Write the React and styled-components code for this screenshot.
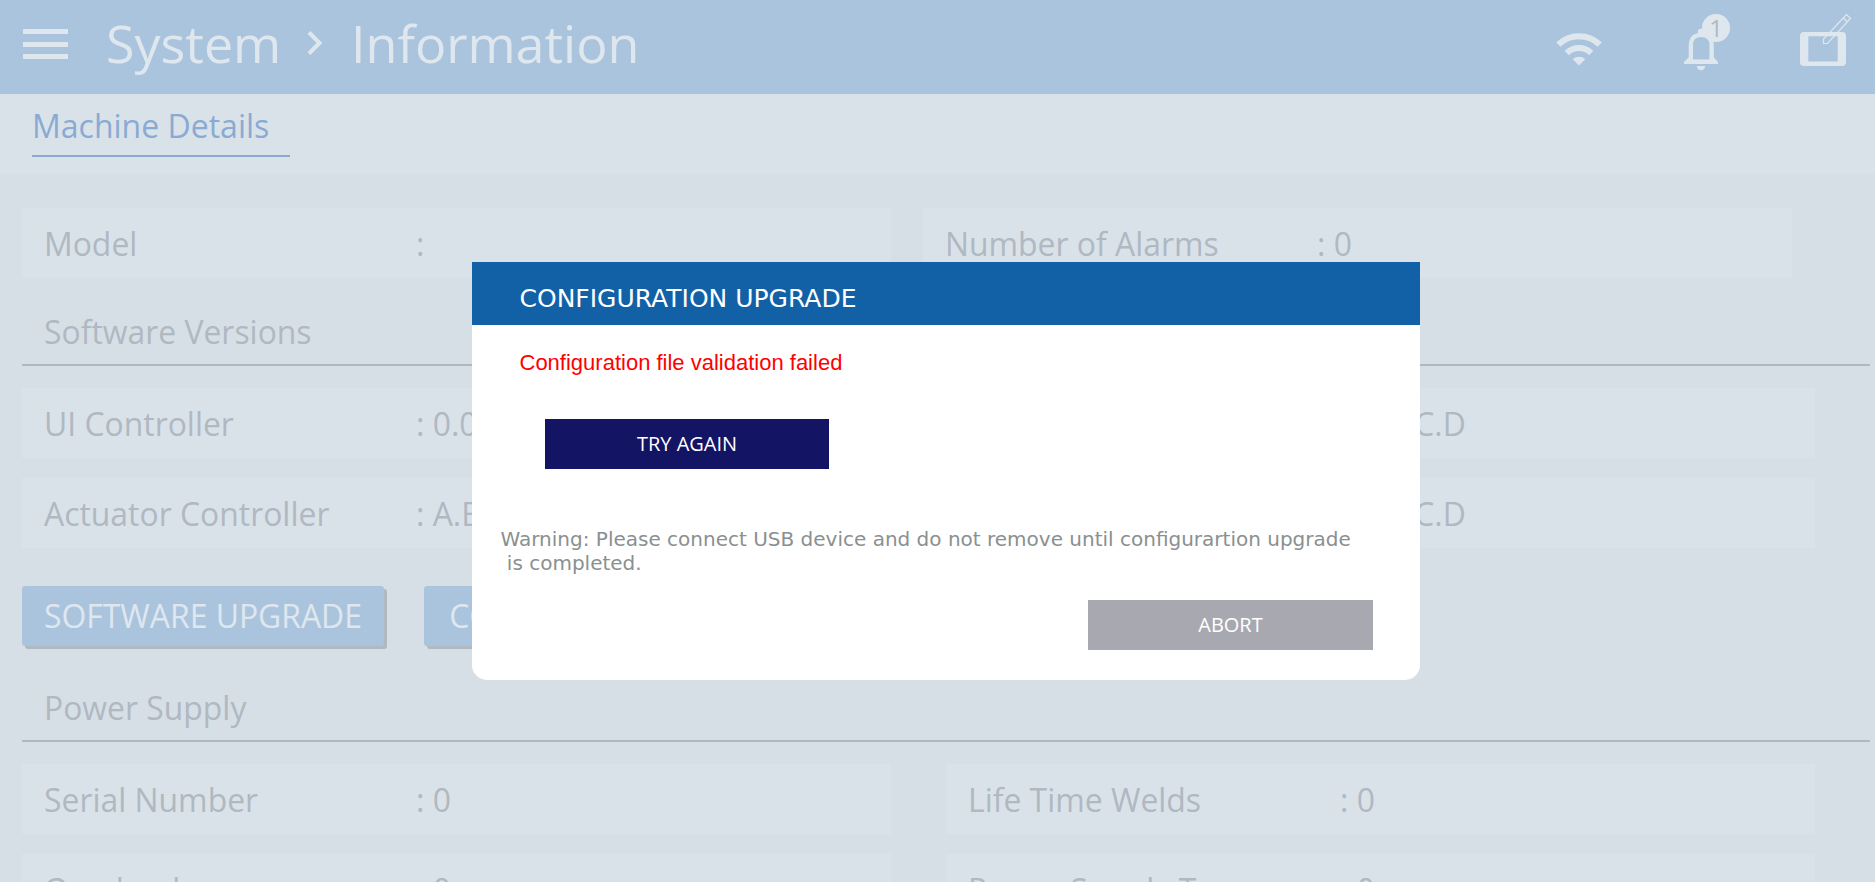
import React from "react";
import styled, { createGlobalStyle } from "styled-components";

const color = {
  bar: "#abc4de",
  onBar: "#dfe7ee",
  page: "#d7dfe6",
  panel: "#dae2e9",
  text: "#b0b8c2",
  link: "#89abd3",
};

const GlobalStyle = createGlobalStyle`
  body { margin: 0; overflow: hidden; }
  * { box-sizing: border-box; }
`;

const Page = styled.div`
  position: relative;
  width: 1875px;
  height: 882px;
  overflow: hidden;
  background: ${color.page};
  color: ${color.text};
  font-family: "Open Sans", sans-serif;
  font-size: 32px;
  white-space: nowrap;
`;

const Header = styled.header`
  display: flex;
  align-items: flex-start;
  height: 94px;
  padding-left: 23px;
  background: ${color.bar};
  color: ${color.onBar};
`;

const Hamburger = styled.div`
  display: flex;
  flex-direction: column;
  justify-content: space-between;
  width: 45px;
  height: 30px;
  margin: 29px 38px 0 0;
`;

const Bar = styled.span`
  height: 5px;
  background: ${color.onBar};
`;

const Crumb = styled.span`
  width: ${(p) => p.$width}px;
  font-size: 52px;
  line-height: 86px;
`;

const Chevron = styled.svg`
  width: 18px;
  height: 26px;
  margin: 30px 27px 0 25px;
`;

const HeaderIcons = styled.div`
  display: flex;
  margin-left: auto;
`;

const HeaderIcon = styled.svg`
  display: block;
  height: 94px;
  width: 100px;
`;

const BellSlot = styled.div`
  position: relative;
  width: 100px;
  margin: 0 11px 0 29px;
`;

const Badge = styled.span`
  position: absolute;
  left: 38px;
  top: 14px;
  width: 28px;
  height: 28px;
  border-radius: 50%;
  background: ${color.onBar};
  color: ${color.text};
  font-size: 24px;
  line-height: 28px;
  text-align: center;
`;

const TabStrip = styled.nav`
  height: 80px;
  padding: 10px 0 0 32px;
  background: ${color.panel};
`;

const Tab = styled.div`
  width: 258px;
  padding-bottom: 7px;
  border-bottom: 2px solid ${color.link};
  color: ${color.link};
  line-height: 44px;
`;

const Content = styled.main`
  padding: 34px 5px 0 22px;
`;

const Rows = styled.div`
  display: grid;
  grid-template-columns: 869px 869px;
  column-gap: ${(p) => p.$gap}px;
  row-gap: 20px;
`;

const Row = styled.div`
  display: flex;
  height: 70px;
  padding: 1px 0 0 22px;
  background: ${color.panel};
  font-size: 31.9px;
  line-height: 69px;
`;

const Label = styled.span`
  width: 372px;
`;

const SectionTitle = styled.h2`
  height: 68px;
  margin: ${(p) => p.$top}px 0 22px;
  padding: 1px 0 0 22px;
  border-bottom: 2px solid ${color.text};
  font-size: 31.9px;
  font-weight: 400;
  line-height: 66px;
`;

const Actions = styled.div`
  display: flex;
  gap: 40px;
  margin-top: 38px;
`;

const ActionButton = styled.button`
  width: ${(p) => p.$width}px;
  height: 60px;
  padding: 0;
  border: 0;
  border-radius: 3px;
  background: ${color.bar};
  box-shadow: 3px 3px 0 ${color.text};
  color: ${color.onBar};
  font: 31.9px/60px "Open Sans", sans-serif;
`;

const Overlay = styled.div`
  position: absolute;
  inset: 0;
  display: flex;
  align-items: flex-start;
  padding: 262px 0 0 472px;
`;

const Dialog = styled.section`
  display: flex;
  flex-direction: column;
  width: 948px;
  height: 418px;
  overflow: hidden;
  border-radius: 0 0 15px 15px;
  background: #fff;
`;

const DialogTitle = styled.h1`
  height: 63px;
  margin: 0;
  padding: 11px 0 0 47.5px;
  background: #1261a6;
  color: #fff;
  font: 400 25px/52px "DejaVu Sans", sans-serif;
`;

const ErrorText = styled.p`
  margin: 23px 0 0 47.5px;
  color: #f00;
  font: 22px/30px "Liberation Sans", sans-serif;
`;

const DialogButton = styled.button`
  width: ${(p) => (p.$muted ? 285 : 284)}px;
  height: 50px;
  margin: ${(p) => (p.$muted ? "25px 47px 0 auto" : "41px 0 0 73px")};
  padding: 0;
  border: 0;
  background: ${(p) => (p.$muted ? "#a8a8b1" : "#141464")};
  color: #fff;
  font: 20px/50px "Open Sans", sans-serif;
`;

const Warning = styled.p`
  margin: 58px 0 0 28.5px;
  color: #8a9090;
  font: 20px/24px "DejaVu Sans", sans-serif;
  white-space: pre;
`;

function Field({ label, value }) {
  return (
    <Row>
      <Label>{label}</Label>
      <span>: {value}</span>
    </Row>
  );
}

function WifiIcon() {
  return (
    <HeaderIcon viewBox="0 0 100 94" fill="none" stroke={color.onBar} strokeWidth="6">
      <path d="M23.3 44.5 A30 30 0 0 1 64.7 44.5" />
      <path d="M31.8 53 A17.5 17.5 0 0 1 56.2 53" />
      <path d="M44 65.5 L37.8 59.3 A9 9 0 0 1 50.2 59.3 Z" fill={color.onBar} stroke="none" />
    </HeaderIcon>
  );
}

function BellIcon() {
  return (
    <HeaderIcon viewBox="0 0 100 94" fill={color.onBar}>
      <circle cx="37" cy="32" r="3.2" />
      <path
        fillRule="evenodd"
        d="M20 64 V62 L24.7 57.5 V46 Q24.7 33 37 33 Q49.8 33 49.8 46 V57.5 L54 62 V64 Z M29 59.5 H45.5 V45 Q45.5 37 37 37 Q29 37 29 45 Z"
      />
      <path d="M32.8 66 H41.2 A4.2 4.2 0 0 1 32.8 66 Z" />
    </HeaderIcon>
  );
}

function TabletIcon() {
  return (
    <HeaderIcon viewBox="0 0 100 94" fill="none" stroke={color.onBar}>
      <path
        fill={color.onBar}
        stroke="none"
        fillRule="evenodd"
        d="M29 32 H67 Q71 32 71 36 V62 Q71 66 67 66 H29 Q25 66 25 62 V36 Q25 32 29 32 Z M33.3 36.3 V61.5 H62.7 V36.3 Z"
      />
      <path d="M48.5 43.5 V39 L71.5 14.5 L75.5 18.5 L52.5 43.5 Z M68.5 18 L72.3 22" strokeWidth="1.2" />
    </HeaderIcon>
  );
}

export default function App() {
  return (
    <Page>
      <GlobalStyle />
      <Header>
        <Hamburger>
          <Bar />
          <Bar />
          <Bar />
        </Hamburger>
        <Crumb $width={175}>System</Crumb>
        <Chevron viewBox="0 0 18 26" fill="none" stroke={color.onBar} strokeWidth="4">
          <path d="M3 2.5 L13.5 13 L3 23.5" />
        </Chevron>
        <Crumb $width={300}>Information</Crumb>
        <HeaderIcons>
          <WifiIcon />
          <BellSlot>
            <BellIcon />
            <Badge>1</Badge>
          </BellSlot>
          <TabletIcon />
        </HeaderIcons>
      </Header>
      <TabStrip>
        <Tab>Machine Details</Tab>
      </TabStrip>
      <Content>
        <Rows $gap={32}>
          <Field label="Model" value="" />
          <Field label="Number of Alarms" value="0" />
        </Rows>
        <SectionTitle $top={20}>Software Versions</SectionTitle>
        <Rows $gap={55}>
          <Field label="UI Controller" value="0.0.0" />
          <Field label="" value="A.B.C.D" />
          <Field label="Actuator Controller" value="A.B.C.D" />
          <Field label="" value="A.B.C.D" />
        </Rows>
        <Actions>
          <ActionButton $width={362}>SOFTWARE UPGRADE</ActionButton>
          <ActionButton $width={461}>CONFIGURATION UPGRADE</ActionButton>
        </Actions>
        <SectionTitle $top={28}>Power Supply</SectionTitle>
        <Rows $gap={55}>
          <Field label="Serial Number" value="0" />
          <Field label="Life Time Welds" value="0" />
          <Field label="Overload" value="0" />
          <Field label="Power Supply Type" value="0" />
        </Rows>
      </Content>
      <Overlay>
        <Dialog>
          <DialogTitle>CONFIGURATION UPGRADE</DialogTitle>
          <ErrorText>Configuration file validation failed</ErrorText>
          <DialogButton>TRY AGAIN</DialogButton>
          <Warning>
            {"Warning: Please connect USB device and do not remove until configurartion upgrade\n is completed."}
          </Warning>
          <DialogButton $muted>ABORT</DialogButton>
        </Dialog>
      </Overlay>
    </Page>
  );
}
